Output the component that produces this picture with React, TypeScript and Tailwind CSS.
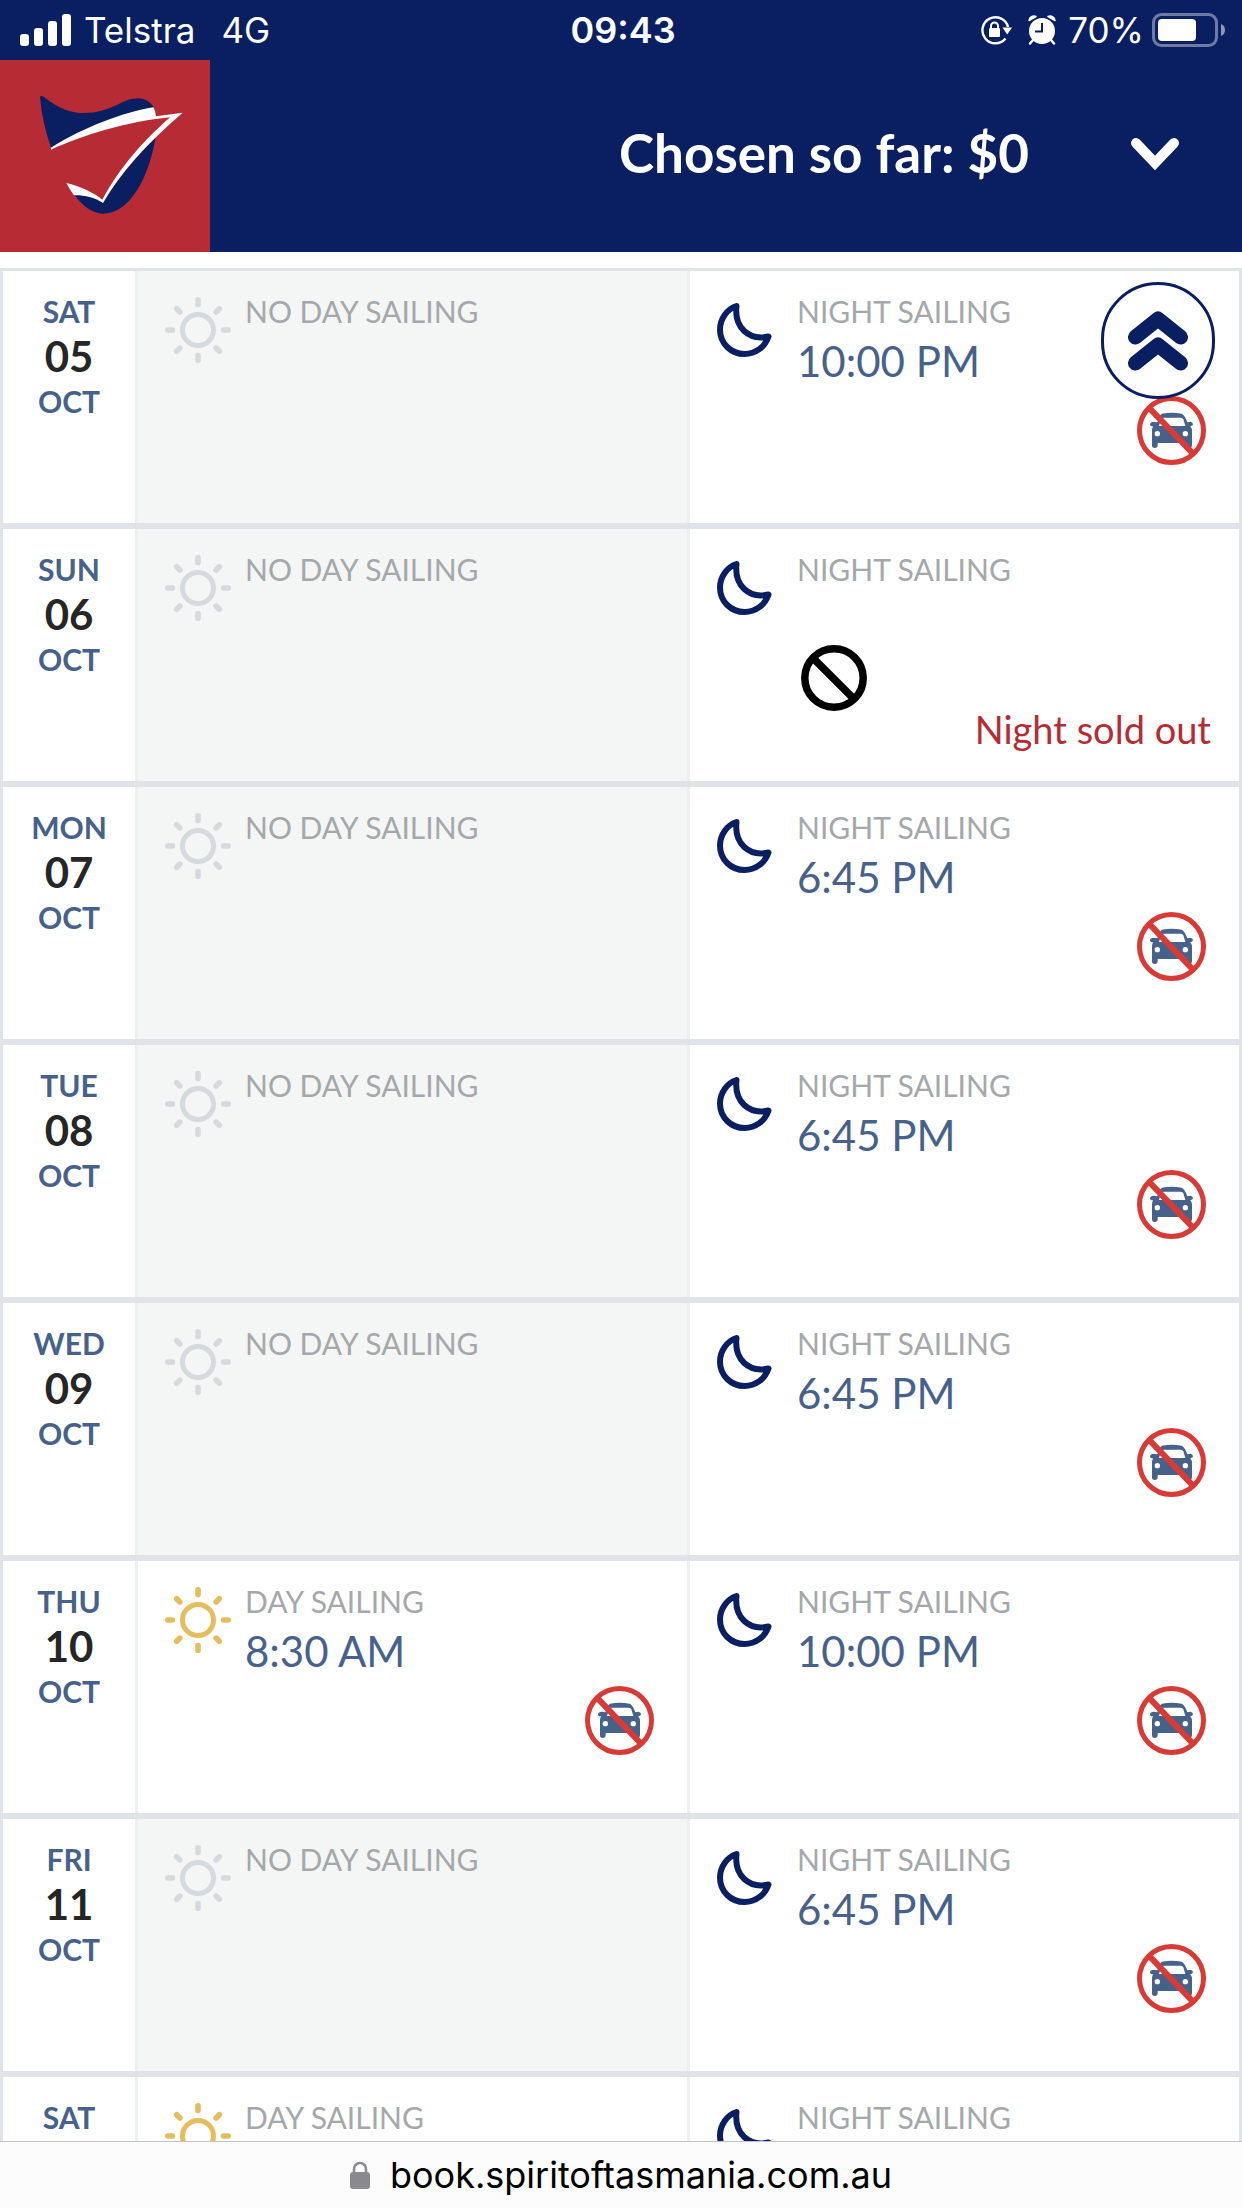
import React from 'react';

type Sailing = {
  time?: string;
  soldOut?: boolean;
};

type DayRow = {
  weekday: string;
  date?: string;
  month?: string;
  day?: Sailing;
  night: Sailing;
};

const rows: DayRow[] = [
  { weekday: 'SAT', date: '05', month: 'OCT', night: { time: '10:00 PM' } },
  { weekday: 'SUN', date: '06', month: 'OCT', night: { soldOut: true } },
  { weekday: 'MON', date: '07', month: 'OCT', night: { time: '6:45 PM' } },
  { weekday: 'TUE', date: '08', month: 'OCT', night: { time: '6:45 PM' } },
  { weekday: 'WED', date: '09', month: 'OCT', night: { time: '6:45 PM' } },
  { weekday: 'THU', date: '10', month: 'OCT', day: { time: '8:30 AM' }, night: { time: '10:00 PM' } },
  { weekday: 'FRI', date: '11', month: 'OCT', night: { time: '6:45 PM' } },
  { weekday: 'SAT', day: {}, night: {} },
];

const rayAngles = [0, 45, 90, 135, 180, 225, 270, 315];

const SunIcon: React.FC<{ className: string }> = ({ className }) => (
  <svg viewBox="0 0 66 66" fill="none" stroke="currentColor" strokeLinecap="round" className={`h-[66px] w-[66px] ${className}`}>
    <circle cx="33" cy="33" r="15.5" strokeWidth="5" />
    {rayAngles.map((angle) => (
      <path key={angle} d="M33 2.8v4.6" strokeWidth="5.6" transform={`rotate(${angle} 33 33)`} />
    ))}
  </svg>
);

const MoonIcon = () => (
  <svg viewBox="0 0 66 66" fill="none" stroke="currentColor" strokeWidth="6" strokeLinejoin="round" className="h-[66px] w-[66px] text-[#0a1f62]">
    <path d="M19.5 9C10 12 3 22 3 32.5C3 46.500 14 57 27.500 57C38.500 57 48 50 51.500 39.500C32 44 17 30.500 19.500 9Z" />
  </svg>
);

const NoCarIcon = () => (
  <svg viewBox="51 36 207 207" className="h-[69px] w-[69px]">
    <g fill="#46628a">
      <path
        fillRule="evenodd"
        d="M112 115 Q118 92 126 89 Q154 83 185 89 Q194 92 202 115 L212 113 Q219 115 219 121 Q219 126 211 127 Q216 133 216 142 V183 Q216 192 207 192 Q199 192 199 183 V177 H113 V184 Q113 192 104 192 Q96 192 96 184 V142 Q96 133 99 127 Q90 127 90 121 Q91 113 101 113ZM117 126H196L190 106Q188 101 182 101H132Q126 101 123 106Z"
      />
    </g>
    <circle cx="112" cy="149" r="8" fill="#fff" />
    <circle cx="196" cy="149" r="8" fill="#fff" />
    <circle cx="154.5" cy="139.5" r="96" fill="none" stroke="#d83b36" strokeWidth="15" />
    <path d="M89 73L219 209" stroke="#d83b36" strokeWidth="18" />
  </svg>
);

const SoldOutIcon = () => (
  <svg viewBox="0 0 66 66" fill="none" stroke="#000" strokeWidth="7.5" className="h-[66px] w-[66px]">
    <circle cx="33" cy="33" r="29.2" />
    <path d="M12 13L53 54" />
  </svg>
);

const Logo = () => (
  <svg viewBox="0 180 630 576" className="h-48 w-[210px] bg-[#b62b34]">
    <path
      fill="#0a1f62"
      d="M120 292Q122 285 131 290C205 350 275 352 355 313C400 288 440 287 461 322L300 390L153 443Q127 370 120 292Z"
    />
    <path
      fill="#0a1f62"
      d="M467 410C448 530 390 641 309 641C275 641 245 615 222 583C260 583 285 590 309 607C350 540 405 475 467 410Z"
    />
    <path
      fill="#fff"
      d="M153 443C255 380 370 337 460 322Q467 333 468 349L548 338C440 430 360 520 309 609C280 590 250 585 222 586Q210 570 199 549C240 558 285 580 307 599C350 520 410 440 510 352C380 365 250 405 153 449Z"
    />
  </svg>
);

const StatusBar = () => (
  <div className="grid h-[60px] grid-cols-3 items-center pr-4 pl-5 font-['Inter',sans-serif] text-[35px] leading-[60px] text-white">
    <div className="flex items-center gap-3">
      <svg viewBox="0 0 52 32" fill="currentColor" className="h-8 w-[52px]">
        <rect x="0" y="20" width="9" height="12" rx="3" />
        <rect x="14" y="14" width="9" height="18" rx="3" />
        <rect x="28" y="7" width="9" height="25" rx="3" />
        <rect x="42" y="0" width="9" height="32" rx="3" />
      </svg>
      <span className="mr-3.5">Telstra</span>
      <span>4G</span>
    </div>
    <span className="text-center text-[36px] font-semibold">09:43</span>
    <div className="flex items-center justify-end gap-2">
      <svg viewBox="0 0 32 30" fill="none" stroke="currentColor" className="mr-2 h-[30px] w-8">
        <path d="M28 12A13 13 0 1 0 25.5 23.5" strokeWidth="2.4" />
        <path d="M22.5 12.5H32L27.2 19.5Z" fill="currentColor" stroke="none" />
        <rect x="9" y="13" width="11" height="9" rx="1" fill="currentColor" stroke="none" />
        <path d="M11 14v-3a3.5 3.5 0 0 1 7 0v3" strokeWidth="2" />
      </svg>
      <svg viewBox="0 0 28 30" className="mr-1 h-[30px] w-7">
        <circle cx="14" cy="16" r="13" fill="#fff" />
        <path d="M5 25L2 28.5M23 25L26 28.5" stroke="#fff" strokeWidth="2.5" strokeLinecap="round" />
        <path d="M1 5.5A5 5 0 0 1 8 1.5ZM27 5.5A5 5 0 0 0 20 1.5Z" fill="#fff" stroke="#fff" strokeWidth="1.5" strokeLinejoin="round" />
        <path d="M14 8v8.5H7" fill="none" stroke="#0a1f62" strokeWidth="2" />
      </svg>
      <span>70%</span>
      <svg viewBox="0 0 74 34" className="h-[34px] w-[74px]">
        <rect x="1.5" y="1.5" width="63" height="31" rx="8" fill="none" stroke="#6f7ba5" strokeWidth="3" />
        <rect x="6" y="6" width="38" height="22" rx="4" fill="#fff" />
        <path d="M69 11a6.500 6.500 0 0 1 0 12Z" fill="#8f98b9" />
      </svg>
    </div>
  </div>
);

const Header = () => (
  <header className="flex h-48 items-center">
    <a href="#home" aria-label="Home">
      <Logo />
    </a>
    <button className="ml-auto flex items-center gap-[100px] pr-[61px] pb-1.5 text-[53px] leading-[60px] font-bold text-white">
      <span>Chosen so far: $0</span>
      <svg viewBox="0 0 52 34" fill="none" stroke="currentColor" strokeWidth="10" strokeLinecap="round" className="h-[34px] w-[52px]">
        <path d="M7 7L26 27L45 7" />
      </svg>
    </button>
  </header>
);

const cellClass = 'flex w-full items-start border-l-3 border-[#edf0f0] pt-[22px] pl-[27px] text-left';
const labelClass = 'text-[30px] leading-9 text-[#a5a8ab]';

const SailingCell: React.FC<{ label: string; icon: React.ReactNode; sailing: Sailing }> = ({ label, icon, sailing }) => (
  <button className={cellClass} disabled={sailing.soldOut}>
    <span className="mt-1 mr-3.5">{icon}</span>
    <span className="flex flex-1 flex-col">
      <span className={labelClass}>{label}</span>
      {sailing.soldOut && (
        <>
          <span className="mt-[58px] ml-1">
            <SoldOutIcon />
          </span>
          <span className="self-end pr-7 text-[38px] leading-9 text-[#b62b34]">Night sold out</span>
        </>
      )}
      {sailing.time && (
        <>
          <span className="mt-1.5 text-[42px] leading-[52px] text-[#46628a]">{sailing.time}</span>
          <span className="mt-[9px] self-end pr-[33px]">
            <NoCarIcon />
          </span>
        </>
      )}
    </span>
  </button>
);

const ScheduleRow: React.FC<{ row: DayRow }> = ({ row }) => (
  <li className="grid min-h-[258px] grid-cols-[132px_1fr_1fr] border-3 border-[#e0e4e8] bg-white">
    <div className="flex flex-col items-center pt-[22px] text-[30px] leading-9 font-bold text-[#46628a]">
      <span>{row.weekday}</span>
      {row.date && <span className="text-[42px] leading-[54px] text-[#262626]">{row.date}</span>}
      {row.month && <span>{row.month}</span>}
    </div>
    {row.day ? (
      <SailingCell label="DAY SAILING" icon={<SunIcon className="text-[#e5bd5c]" />} sailing={row.day} />
    ) : (
      <div className={`bg-[#f4f6f6] ${cellClass}`}>
        <span className="mt-1 mr-3.5">
          <SunIcon className="text-[#d5dade]" />
        </span>
        <span className={labelClass}>NO DAY SAILING</span>
      </div>
    )}
    <SailingCell label="NIGHT SAILING" icon={<MoonIcon />} sailing={row.night} />
  </li>
);

const AddressBar = () => (
  <footer className="flex h-[67px] shrink-0 items-center justify-center gap-5 border-t border-[#c4c4c8] bg-[#fcfcfd] font-['Inter',sans-serif] text-[36px] leading-[44px] text-black">
    <svg viewBox="0 0 20 28" className="h-7 w-5">
      <rect x="0" y="11" width="20" height="17" rx="3" fill="#8a8a8e" />
      <path d="M4 12V8a6 6 0 0 1 12 0v4" fill="none" stroke="#8a8a8e" strokeWidth="2.5" />
    </svg>
    <span>book.spiritoftasmania.com.au</span>
  </footer>
);

const App: React.FC = () => {
  return (
    <div className="flex h-screen flex-col bg-white font-['Lato',sans-serif]">
      <div className="shrink-0 bg-[#0a1f62]">
        <StatusBar />
        <Header />
      </div>

      <div className="relative min-h-0 flex-1">
        <main className="h-full overflow-y-auto pt-4 [scrollbar-width:none]">
          <ul>
            {rows.map((row, index) => (
              <ScheduleRow key={index} row={row} />
            ))}
          </ul>
        </main>

        <button
          aria-label="Back to top"
          className="absolute top-[30px] right-[27px] flex h-[117px] w-[114px] items-center justify-center rounded-full border-3 border-[#0a1f62] bg-white"
        >
          <svg viewBox="0 0 60 60" fill="none" stroke="#0a1f62" strokeWidth="15" strokeLinecap="round" strokeLinejoin="round" className="h-[60px] w-[60px]">
            <path d="M7.5 26L30 8L52.5 26M7.5 52L30 34L52.5 52" />
          </svg>
        </button>
      </div>

      <AddressBar />
    </div>
  );
};

export default App;
